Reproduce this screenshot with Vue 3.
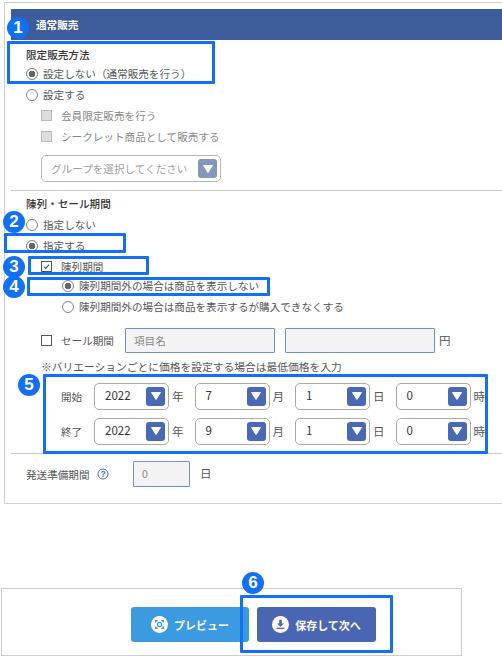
<script setup>
const dateRows = [
  { label: '開始', values: ['2022', '7', '1', '0'] },
  { label: '終了', values: ['2022', '9', '1', '0'] },
]
const units = ['年', '月', '日', '時']
</script>

<template>
  <div class="page">
    <section class="panel">
      <h2 class="head">通常販売</h2>

      <div class="block first">
        <div class="title">限定販売方法</div>
        <label class="row"><i class="radio on"></i>設定しない（通常販売を行う）</label>
        <label class="row"><i class="radio"></i>設定する</label>
        <label class="row sub muted"><i class="check off"></i>会員限定販売を行う</label>
        <label class="row sub muted"><i class="check off"></i>シークレット商品として販売する</label>
        <div class="group-select">
          <span>グループを選択してください</span>
          <b class="arrow pale"><svg viewBox="0 0 12 10"><path d="M1.5 1.5h9L6 8.5z" /></svg></b>
        </div>
      </div>

      <div class="block second">
        <div class="title">陳列・セール期間</div>
        <label class="row gap-top"><i class="radio"></i>指定しない</label>
        <label class="row"><i class="radio on"></i>指定する</label>
        <label class="row sub"><i class="check"><svg viewBox="0 0 12 12"><path d="M2.5 6l2.5 2.5 4.5-5" /></svg></i>陳列期間</label>
        <label class="row deep pull"><i class="radio on"></i>陳列期間外の場合は商品を表示しない</label>
        <label class="row deep"><i class="radio"></i>陳列期間外の場合は商品を表示するが購入できなくする</label>
        <div class="sale">
          <label class="sale-label"><i class="check"></i>セール期間</label>
          <div class="field wide">項目名</div>
          <div class="field wide gap"></div>
          <span class="yen">円</span>
        </div>
        <p class="note">※バリエーションごとに価格を設定する場合は最低価格を入力</p>
        <div v-for="row in dateRows" :key="row.label" class="date-row">
          <span class="date-label">{{ row.label }}</span>
          <div v-for="(value, i) in row.values" :key="i" class="date-cell">
            <div class="date-select">
              <span class="date-value">{{ value }}</span>
              <b class="arrow"><svg viewBox="0 0 12 10"><path d="M1.5 1.5h9L6 8.5z" /></svg></b>
            </div>
            <span class="unit">{{ units[i] }}</span>
          </div>
        </div>
      </div>

      <div class="ship">
        <span class="ship-label">発送準備期間</span>
        <svg class="help" viewBox="0 0 12 12">
          <circle cx="6" cy="6" r="5" />
          <text x="6" y="8.9" text-anchor="middle">?</text>
        </svg>
        <div class="field small">0</div>
        <span class="ship-unit">日</span>
      </div>
    </section>

    <footer class="footer">
      <button class="btn preview" type="button">
        <span class="btn-icon">
          <svg viewBox="0 0 18 18">
            <path d="M5 7V5h2M11 5h2v2M13 11v2h-2M7 13H5v-2" />
            <circle cx="9" cy="9" r="2.2" />
          </svg>
        </span>
        プレビュー
      </button>
      <button class="btn save" type="button">
        <span class="btn-icon">
          <svg viewBox="0 0 18 18">
            <path class="fill" d="M7.6 4h2.8v4h2.2L9 11.4 5.4 8h2.2zM4.8 12.4h8.4v1.4H4.8z" />
          </svg>
        </span>
        保存して次へ
      </button>
    </footer>

    <div class="mark m1"></div>
    <div class="mark m2"></div>
    <div class="mark m3"></div>
    <div class="mark m4"></div>
    <div class="mark m5"></div>
    <div class="mark m6"></div>
    <span class="num n1">1</span>
    <span class="num n2">2</span>
    <span class="num n3">3</span>
    <span class="num n4">4</span>
    <span class="num n5">5</span>
    <span class="num n6">6</span>
  </div>
</template>

<style>
html, body { margin: 0; background: #fff; }
</style>

<style scoped>
.page {
  position: relative;
  width: 502px;
  height: 656px;
  overflow: hidden;
  padding-top: 2px;
  box-sizing: border-box;
  font-family: "Noto Sans CJK JP", "Noto Sans", sans-serif;
  font-size: 10.6px;
  color: #555;
  background: #fff;
}
.panel {
  box-sizing: border-box;
  margin-left: 4px;
  width: 498px;
  height: 502px;
  padding: 6px 0 0 6px;
  border: 1px solid #ccc;
  border-right: 0;
}
.head {
  margin: 0;
  height: 31px;
  padding-left: 25px;
  line-height: 31px;
  font-size: 10.6px;
  font-weight: 700;
  color: #fff;
  background: #3f5c9a;
}
.block { padding-left: 15px; border-bottom: 1px solid #c8c8c8; }
.first { height: 151px; padding-top: 7px; box-sizing: border-box; }
.second { height: 263px; padding-top: 5px; box-sizing: border-box; }
.title { height: 16px; line-height: 16px; color: #333; font-weight: 500; }
.row { display: flex; align-items: center; height: 21px; line-height: 21px; white-space: nowrap; }
.gap-top { margin-top: 2px; }
.pull { margin-top: -2px; }
.sub { padding-left: 15px; }
.deep { padding-left: 36px; }
.muted { color: #888; }
.radio {
  flex: none;
  box-sizing: border-box;
  width: 12px;
  height: 12px;
  margin-right: 5px;
  border: 1px solid #808080;
  border-radius: 50%;
  background: #fff;
}
.radio.on { background: radial-gradient(circle, #666 0 3px, #fff 3.6px); }
.check {
  flex: none;
  box-sizing: border-box;
  display: flex;
  width: 11px;
  height: 11px;
  margin-right: 9px;
  border: 1px solid #555;
  background: #fff;
}
.check.off { border-color: #bbb; background: #ddd; }
.check svg { width: 100%; height: 100%; fill: none; stroke: #2a4a7f; stroke-width: 1.4; }
.group-select {
  box-sizing: border-box;
  display: flex;
  align-items: center;
  justify-content: space-between;
  width: 180px;
  height: 27px;
  margin: 8px 0 0 15px;
  padding: 0 3px 0 9px;
  border: 1px solid #b5b5b5;
  border-radius: 5px;
  color: #a0a0a0;
}
.arrow {
  flex: none;
  display: flex;
  align-items: center;
  justify-content: center;
  width: 19px;
  height: 19px;
  border-radius: 3px;
  background: #4a69b5;
}
.arrow.pale { background: #8497bb; }
.arrow svg { width: 12px; height: 10px; fill: #fff; stroke: #fff; stroke-width: 1; stroke-linejoin: round; }
.sale { display: flex; align-items: center; height: 26px; margin-top: 10px; padding-left: 15px; }
.sale-label { display: flex; align-items: center; width: 84px; white-space: nowrap; }
.field {
  box-sizing: border-box;
  height: 25px;
  line-height: 23px;
  padding-left: 8px;
  border: 1px solid #6f8fd6;
  border-radius: 1px;
  background: #f3f3f3;
  color: #888;
}
.wide { width: 150px; }
.gap { margin-left: 10px; }
.yen { margin-left: 4px; font-size: 11.5px; }
.note { margin: 5px 0 0 15px; height: 18px; line-height: 18px; font-size: 10.75px; white-space: nowrap; }
.date-row { display: flex; align-items: center; height: 26px; margin-top: 7px; padding-left: 35px; }
.date-row + .date-row { margin-top: 9px; }
.date-label { width: 33px; }
.date-cell { display: flex; align-items: center; width: 100.5px; }
.date-select {
  box-sizing: border-box;
  display: flex;
  align-items: center;
  justify-content: space-between;
  width: 75px;
  height: 27px;
  padding: 0 3px 0 10px;
  border: 1px solid #aaa;
  border-radius: 5px;
  color: #333;
}
.date-value { margin-top: -3px; font-size: 11.5px; }
.unit { margin-left: 3px; font-size: 11.5px; }
.ship { display: flex; align-items: center; height: 26px; margin-top: 7px; padding-left: 15px; }
.ship-label { width: 71px; white-space: nowrap; }
.help { width: 12px; height: 12px; margin-right: 24px; }
.help circle { fill: none; stroke: #4a69b5; stroke-width: 1; }
.help text { font-size: 8.5px; font-weight: 700; fill: #4a69b5; font-family: "Liberation Sans", sans-serif; }
.small { width: 57px; height: 26px; line-height: 24px; }
.ship-unit { margin: -3px 0 0 10px; font-size: 11.5px; }
.footer {
  box-sizing: border-box;
  display: flex;
  justify-content: flex-start;
  gap: 8px;
  width: 461px;
  height: 68px;
  margin: 84px 0 0 1px;
  padding: 18px 0 0 129px;
  border: 1px solid #ccc;
}
.btn {
  display: flex;
  align-items: center;
  justify-content: center;
  gap: 6px;
  width: 118px;
  height: 35px;
  padding: 0;
  border: 0;
  border-radius: 3px;
  font: 700 11px "Noto Sans CJK JP", sans-serif;
  color: #fff;
}
.preview { background: #3c9ae0; }
.save { width: 119px; background: #4a66b3; }
.btn-icon { display: flex; width: 17px; height: 17px; border-radius: 50%; background: #fff; }
.btn-icon svg { width: 100%; height: 100%; }
.preview svg path { fill: none; stroke: #3c9ae0; stroke-width: 1.5; }
.preview svg circle { fill: none; stroke: #3c9ae0; stroke-width: 1.3; }
.save .fill { fill: #4a66b3; }

.mark { position: absolute; box-sizing: border-box; border: 3px solid #1170f5; border-radius: 1px; }
.m1 { left: 7px; top: 41px; width: 208px; height: 43px; }
.m2 { left: 4px; top: 233px; width: 122px; height: 20px; }
.m3 { left: 28px; top: 256px; width: 121px; height: 19px; }
.m4 { left: 27px; top: 277px; width: 243px; height: 19px; }
.m5 { left: 43px; top: 374px; width: 445px; height: 80px; }
.m6 { left: 240px; top: 595px; width: 153px; height: 58px; }
.num {
  position: absolute;
  width: 22px;
  height: 22px;
  border-radius: 50%;
  text-align: center;
  font: 700 17px/22px "Liberation Sans", sans-serif;
  color: #fff;
  background: #1170f5;
}
.n1 { left: 7px; top: 17px; }
.n2 { left: 3px; top: 211px; }
.n3 { left: 3px; top: 256px; }
.n4 { left: 3px; top: 276px; }
.n5 { left: 18px; top: 374px; }
.n6 { left: 242px; top: 572px; }
</style>
